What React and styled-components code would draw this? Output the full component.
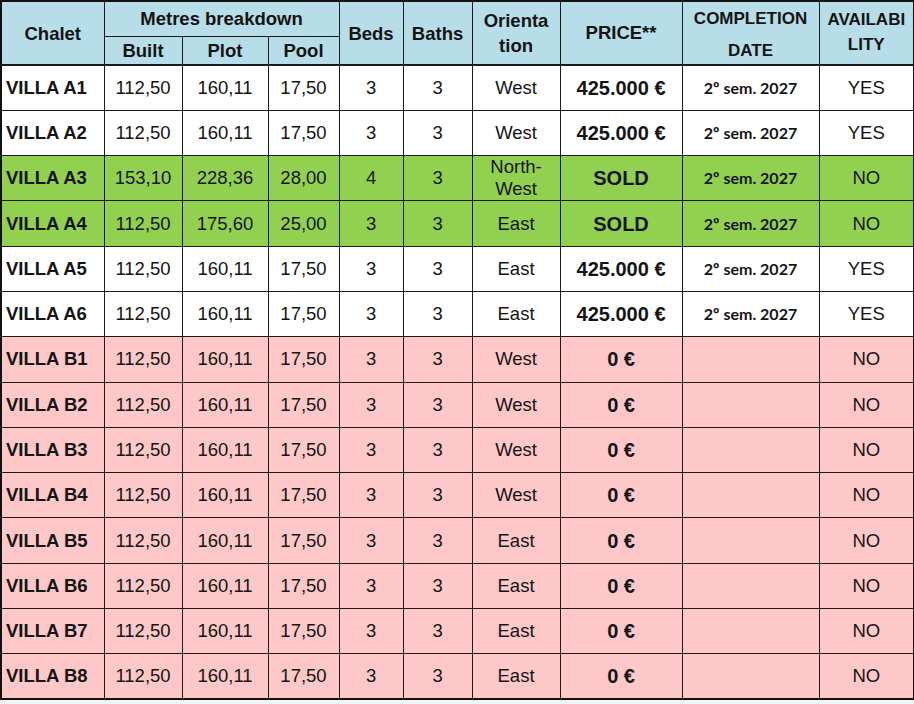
import React from 'react';
import styled, { createGlobalStyle } from 'styled-components';

const GlobalStyle = createGlobalStyle`
  body {
    margin: 0;
    background: #f3f3f3;
    font-family: "Liberation Sans", Arial, sans-serif;
  }
`;

const Sheet = styled.table`
  width: 913px;
  table-layout: fixed;
  border-collapse: collapse;
  border: 2px solid #111;
  background: #fff;
  color: #141414;
`;

const HeadCell = styled.th`
  background: #b7dde8;
  border: 1.5px solid #1a1a1a;
  border-bottom-width: ${(p) => (p.$inner ? '1.5px' : '2.5px')};
  font-size: ${(p) => (p.$small ? '17px' : '18.5px')};
  font-weight: 700;
  line-height: 25px;
  padding: ${(p) => p.$pad || '0'};
  text-align: center;
  vertical-align: middle;
`;

const HeadLine = styled.span`
  display: block;
  margin-top: ${(p) => p.$gap || 0}px;
`;

const HeadRow = styled.tr`
  height: ${(p) => p.$h}px;
`;

const Row = styled.tr`
  height: 45.3px;
  background: ${(p) => p.$bg};
`;

const Cell = styled.td`
  border: 1.5px solid #1a1a1a;
  padding: 0;
  text-align: center;
  vertical-align: middle;
  font-size: 18.5px;
  line-height: 22px;
`;

const NameCell = styled(Cell)`
  text-align: left;
  padding-left: 4px;
  font-weight: 700;
`;

const PriceCell = styled(Cell)`
  font-weight: 700;
  font-size: 20px;
`;

const DateCell = styled(Cell)`
  font-family: Lato, "Open Sans", sans-serif;
  font-weight: 700;
  font-size: 16px;
`;

const widths = [103, 78, 86, 71, 64, 69, 88, 122, 137, 95];

const colours = {
  white: '#ffffff',
  sold: '#92d050',
  pending: '#fec8c9',
};

const standard = ['112,50', '160,11', '17,50'];

const rows = [
  { name: 'VILLA A1', m: standard, beds: 3, or: 'West', price: '425.000 €', date: '2º sem. 2027', av: 'YES', bg: 'white' },
  { name: 'VILLA A2', m: standard, beds: 3, or: 'West', price: '425.000 €', date: '2º sem. 2027', av: 'YES', bg: 'white' },
  { name: 'VILLA A3', m: ['153,10', '228,36', '28,00'], beds: 4, or: 'North-West', price: 'SOLD', date: '2º sem. 2027', av: 'NO', bg: 'sold' },
  { name: 'VILLA A4', m: ['112,50', '175,60', '25,00'], beds: 3, or: 'East', price: 'SOLD', date: '2º sem. 2027', av: 'NO', bg: 'sold' },
  { name: 'VILLA A5', m: standard, beds: 3, or: 'East', price: '425.000 €', date: '2º sem. 2027', av: 'YES', bg: 'white' },
  { name: 'VILLA A6', m: standard, beds: 3, or: 'East', price: '425.000 €', date: '2º sem. 2027', av: 'YES', bg: 'white' },
  { name: 'VILLA B1', m: standard, beds: 3, or: 'West', price: '0 €', date: '', av: 'NO', bg: 'pending' },
  { name: 'VILLA B2', m: standard, beds: 3, or: 'West', price: '0 €', date: '', av: 'NO', bg: 'pending' },
  { name: 'VILLA B3', m: standard, beds: 3, or: 'West', price: '0 €', date: '', av: 'NO', bg: 'pending' },
  { name: 'VILLA B4', m: standard, beds: 3, or: 'West', price: '0 €', date: '', av: 'NO', bg: 'pending' },
  { name: 'VILLA B5', m: standard, beds: 3, or: 'East', price: '0 €', date: '', av: 'NO', bg: 'pending' },
  { name: 'VILLA B6', m: standard, beds: 3, or: 'East', price: '0 €', date: '', av: 'NO', bg: 'pending' },
  { name: 'VILLA B7', m: standard, beds: 3, or: 'East', price: '0 €', date: '', av: 'NO', bg: 'pending' },
  { name: 'VILLA B8', m: standard, beds: 3, or: 'East', price: '0 €', date: '', av: 'NO', bg: 'pending' },
];

const App = () => {
  return (
    <>
      <GlobalStyle />
      <Sheet>
        <colgroup>
          {widths.map((w, i) => (
            <col key={i} style={{ width: w }} />
          ))}
        </colgroup>
        <thead>
          <HeadRow $h={35}>
            <HeadCell rowSpan={2}>Chalet</HeadCell>
            <HeadCell colSpan={3} $inner>Metres breakdown</HeadCell>
            <HeadCell rowSpan={2}>Beds</HeadCell>
            <HeadCell rowSpan={2}>Baths</HeadCell>
            <HeadCell rowSpan={2}>
              <HeadLine>Orienta</HeadLine>
              <HeadLine>tion</HeadLine>
            </HeadCell>
            <HeadCell rowSpan={2} $pad="0 0 2px">PRICE**</HeadCell>
            <HeadCell rowSpan={2} $small $pad="3px 0 0">
              <HeadLine>COMPLETION</HeadLine>
              <HeadLine $gap={7}>DATE</HeadLine>
            </HeadCell>
            <HeadCell rowSpan={2} $small $pad="0 0 2px">
              <HeadLine>AVAILABI</HeadLine>
              <HeadLine>LITY</HeadLine>
            </HeadCell>
          </HeadRow>
          <HeadRow $h={29}>
            <HeadCell>Built</HeadCell>
            <HeadCell>Plot</HeadCell>
            <HeadCell>Pool</HeadCell>
          </HeadRow>
        </thead>
        <tbody>
          {rows.map((r) => (
            <Row key={r.name} $bg={colours[r.bg]}>
              <NameCell>{r.name}</NameCell>
              {r.m.map((v, i) => (
                <Cell key={i}>{v}</Cell>
              ))}
              <Cell>{r.beds}</Cell>
              <Cell>3</Cell>
              <Cell>
                {r.or === 'North-West' ? (
                  <>
                    North-
                    <br />
                    West
                  </>
                ) : (
                  r.or
                )}
              </Cell>
              <PriceCell>{r.price}</PriceCell>
              <DateCell>{r.date}</DateCell>
              <Cell>{r.av}</Cell>
            </Row>
          ))}
        </tbody>
      </Sheet>
    </>
  );
};

export default App;
